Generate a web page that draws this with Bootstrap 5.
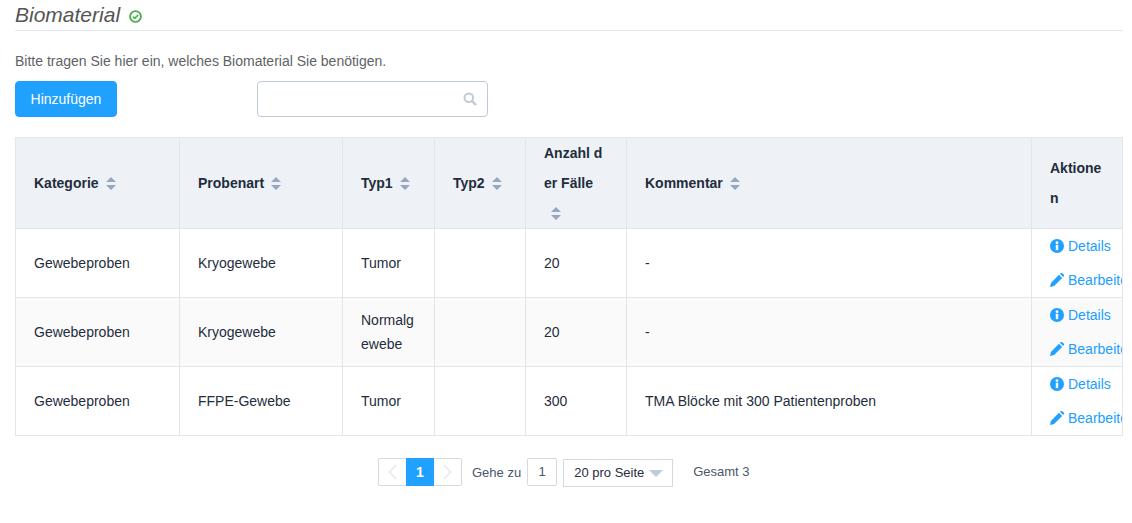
<!DOCTYPE html>
<html lang="de">
<head>
<meta charset="utf-8">
<title>Biomaterial</title>
<link rel="stylesheet" href="https://cdn.jsdelivr.net/npm/bootstrap@5.3.0/dist/css/bootstrap.min.css">
<style>
html,body{height:523px;overflow:hidden}
body{font-family:"Liberation Sans",Arial,sans-serif;font-size:14px;color:#606266;background:#fff}
.pg-wrap{padding:0 9px 0 15px}
.bio-head{height:31px;border-bottom:1px solid #e4e7ed;font-size:21px;font-style:italic;color:#555;line-height:30px}
.bio-head svg{margin-left:9px;vertical-align:-1px}
.bio-intro{margin:21px 0 0;line-height:19px}
.bio-tools{margin-top:10px;height:36px}
.btn-add{width:102px;height:36px;padding:0;background:#20a0ff;border:1px solid #20a0ff;color:#fff;font-size:14px;border-radius:4px}
.btn-add:hover{background:#20a0ff;color:#fff}
.bio-search{width:231px;height:36px;margin-left:140px;border:1px solid #bfcbd9;border-radius:4px;padding-right:10px}
.tbl-clip{margin-top:20px;width:1108px;height:299px;overflow:hidden}
.bio-table{table-layout:fixed;width:1107px;margin:0;font-size:14px;border-collapse:collapse;--bs-table-bg:transparent;color:#1f2d3d}
.bio-table th,.bio-table td{border:1px solid #dfe6ec;padding:0 18px;vertical-align:middle;word-break:break-all;--bs-table-accent-bg:transparent}
.bio-table th{background:#eef1f6;line-height:30px;height:91px;font-weight:700;color:#1f2d3d}
.bio-table td{height:69px;line-height:24px;color:#1f2d3d}
.bio-table tr.alt td{background:#fafafa}
.bio-table td.act{line-height:34px;white-space:nowrap;word-break:normal;padding-right:0;overflow:hidden}
.sort-ic{display:inline-block;width:10px;height:13px;margin-left:7px;vertical-align:-2px}
.act-link{display:block;color:#20a0ff;text-decoration:none}
.act-link svg{margin-right:4px;vertical-align:-2px}
.pager{margin-top:22px;height:30px;margin-left:363px;font-size:13px;color:#48576a}
.pg-box{width:28px;height:28px;border:1px solid #d1dbe5;background:#fff;display:flex;align-items:center;justify-content:center}
.pg-box.on{background:#20a0ff;border-color:#20a0ff;color:#fff;font-weight:700;font-size:14px}
.pg-box.l{border-right:0;border-radius:2px 0 0 2px}
.pg-box.r{border-left:0;border-radius:0 2px 2px 0}
.pg-goto{margin:0 6px 0 10px;line-height:29px}
.pg-input{width:30px;height:28px;border:1px solid #d1dbe5;border-radius:2px;display:flex;align-items:center;justify-content:center;color:#48576a}
.pg-size{width:110px;height:28px;margin:1px 0 0 6px;border:1px solid #d1dbe5;padding-left:10px;font-size:13px;color:#1f2d3d;display:flex;align-items:center;gap:5px}
.pg-size i{display:block;width:0;height:0;border-left:7px solid transparent;border-right:7px solid transparent;border-top:7px solid #bfcbd9;margin-top:1px}
.pg-total{margin-left:20px;line-height:28px}
</style>
</head>
<body>
<div class="pg-wrap">
  <div class="bio-head">Biomaterial<svg width="13" height="13" viewBox="0 0 13 13" fill="none"><circle cx="6.500" cy="6.500" r="5.400" stroke="#4caf50" stroke-width="1.900"/><path d="M3.900 6.600l1.900 1.800 3.300-3.400" stroke="#4caf50" stroke-width="1.700"/></svg></div>
  <p class="bio-intro">Bitte tragen Sie hier ein, welches Biomaterial Sie benötigen.</p>
  <div class="bio-tools d-flex">
    <button type="button" class="btn btn-add">Hinzufügen</button>
    <div class="bio-search d-flex align-items-center justify-content-end">
      <svg width="14" height="14" viewBox="0 0 14 14" fill="none"><circle cx="5.800" cy="5.800" r="4.300" stroke="#bfcbd9" stroke-width="2"/><path d="M9 9l4 4" stroke="#bfcbd9" stroke-width="2.400"/></svg>
    </div>
  </div>
  <div class="tbl-clip">
    <table class="table bio-table">
      <colgroup>
        <col style="width:164px"><col style="width:163px"><col style="width:92px"><col style="width:91px"><col style="width:101px"><col style="width:405px"><col style="width:91px">
      </colgroup>
      <thead>
        <tr>
          <th>Kategorie<svg class="sort-ic" viewBox="0 0 10 13"><path d="M5 0l5 5H0zM5 13L0 8h10z" fill="#97a8be"/></svg></th>
          <th>Probenart<svg class="sort-ic" viewBox="0 0 10 13"><path d="M5 0l5 5H0zM5 13L0 8h10z" fill="#97a8be"/></svg></th>
          <th>Typ1<svg class="sort-ic" viewBox="0 0 10 13"><path d="M5 0l5 5H0zM5 13L0 8h10z" fill="#97a8be"/></svg></th>
          <th>Typ2<svg class="sort-ic" viewBox="0 0 10 13"><path d="M5 0l5 5H0zM5 13L0 8h10z" fill="#97a8be"/></svg></th>
          <th>Anzahl der Fälle<svg class="sort-ic" viewBox="0 0 10 13"><path d="M5 0l5 5H0zM5 13L0 8h10z" fill="#97a8be"/></svg></th>
          <th>Kommentar<svg class="sort-ic" viewBox="0 0 10 13"><path d="M5 0l5 5H0zM5 13L0 8h10z" fill="#97a8be"/></svg></th>
          <th>Aktionen</th>
        </tr>
      </thead>
      <tbody>
        <tr>
          <td>Gewebeproben</td><td>Kryogewebe</td><td>Tumor</td><td></td><td>20</td><td>-</td>
          <td class="act">
            <a class="act-link" href="#"><svg width="14" height="14" viewBox="0 0 15 15"><circle cx="7.500" cy="7.500" r="7.500" fill="#20a0ff"/><rect x="6.200" y="6.200" width="2.600" height="5.800" fill="#fff"/><circle cx="7.500" cy="3.900" r="1.500" fill="#fff"/></svg>Details</a>
            <a class="act-link" href="#"><svg width="14" height="14" viewBox="0 0 15 15"><path d="M0 15l1-4.400L9.600 2l3.400 3.400L4.400 14zM10.700.9l1-.9c.4-.3.900-.3 1.200 0l2 2c.3.300.3.800 0 1.200l-.9 1z" fill="#20a0ff"/></svg>Bearbeiten</a>
          </td>
        </tr>
        <tr class="alt">
          <td>Gewebeproben</td><td>Kryogewebe</td><td>Normalgewebe</td><td></td><td>20</td><td>-</td>
          <td class="act">
            <a class="act-link" href="#"><svg width="14" height="14" viewBox="0 0 15 15"><circle cx="7.500" cy="7.500" r="7.500" fill="#20a0ff"/><rect x="6.200" y="6.200" width="2.600" height="5.800" fill="#fff"/><circle cx="7.500" cy="3.900" r="1.500" fill="#fff"/></svg>Details</a>
            <a class="act-link" href="#"><svg width="14" height="14" viewBox="0 0 15 15"><path d="M0 15l1-4.400L9.600 2l3.400 3.400L4.400 14zM10.700.9l1-.9c.4-.3.900-.3 1.200 0l2 2c.3.300.3.800 0 1.200l-.9 1z" fill="#20a0ff"/></svg>Bearbeiten</a>
          </td>
        </tr>
        <tr>
          <td>Gewebeproben</td><td>FFPE-Gewebe</td><td>Tumor</td><td></td><td>300</td><td>TMA Blöcke mit 300 Patientenproben</td>
          <td class="act">
            <a class="act-link" href="#"><svg width="14" height="14" viewBox="0 0 15 15"><circle cx="7.500" cy="7.500" r="7.500" fill="#20a0ff"/><rect x="6.200" y="6.200" width="2.600" height="5.800" fill="#fff"/><circle cx="7.500" cy="3.900" r="1.500" fill="#fff"/></svg>Details</a>
            <a class="act-link" href="#"><svg width="14" height="14" viewBox="0 0 15 15"><path d="M0 15l1-4.400L9.600 2l3.400 3.400L4.400 14zM10.700.9l1-.9c.4-.3.900-.3 1.200 0l2 2c.3.300.3.800 0 1.200l-.9 1z" fill="#20a0ff"/></svg>Bearbeiten</a>
          </td>
        </tr>
      </tbody>
    </table>
  </div>
  <div class="pager d-flex align-items-start">
    <div class="pg-box l"><svg width="9" height="16" viewBox="0 0 9 16" fill="none"><path d="M8 1L1.500 8 8 15" stroke="#e4e7ed" stroke-width="1.600"/></svg></div>
    <div class="pg-box on">1</div>
    <div class="pg-box r"><svg width="9" height="16" viewBox="0 0 9 16" fill="none"><path d="M1 1l6.500 7L1 15" stroke="#e4e7ed" stroke-width="1.600"/></svg></div>
    <span class="pg-goto">Gehe zu</span>
    <div class="pg-input">1</div>
    <div class="pg-size">20 pro Seite<i></i></div>
    <span class="pg-total">Gesamt 3</span>
  </div>
</div>
<script src="https://cdn.jsdelivr.net/npm/bootstrap@5.3.0/dist/js/bootstrap.bundle.min.js"></script>
</body>
</html>
